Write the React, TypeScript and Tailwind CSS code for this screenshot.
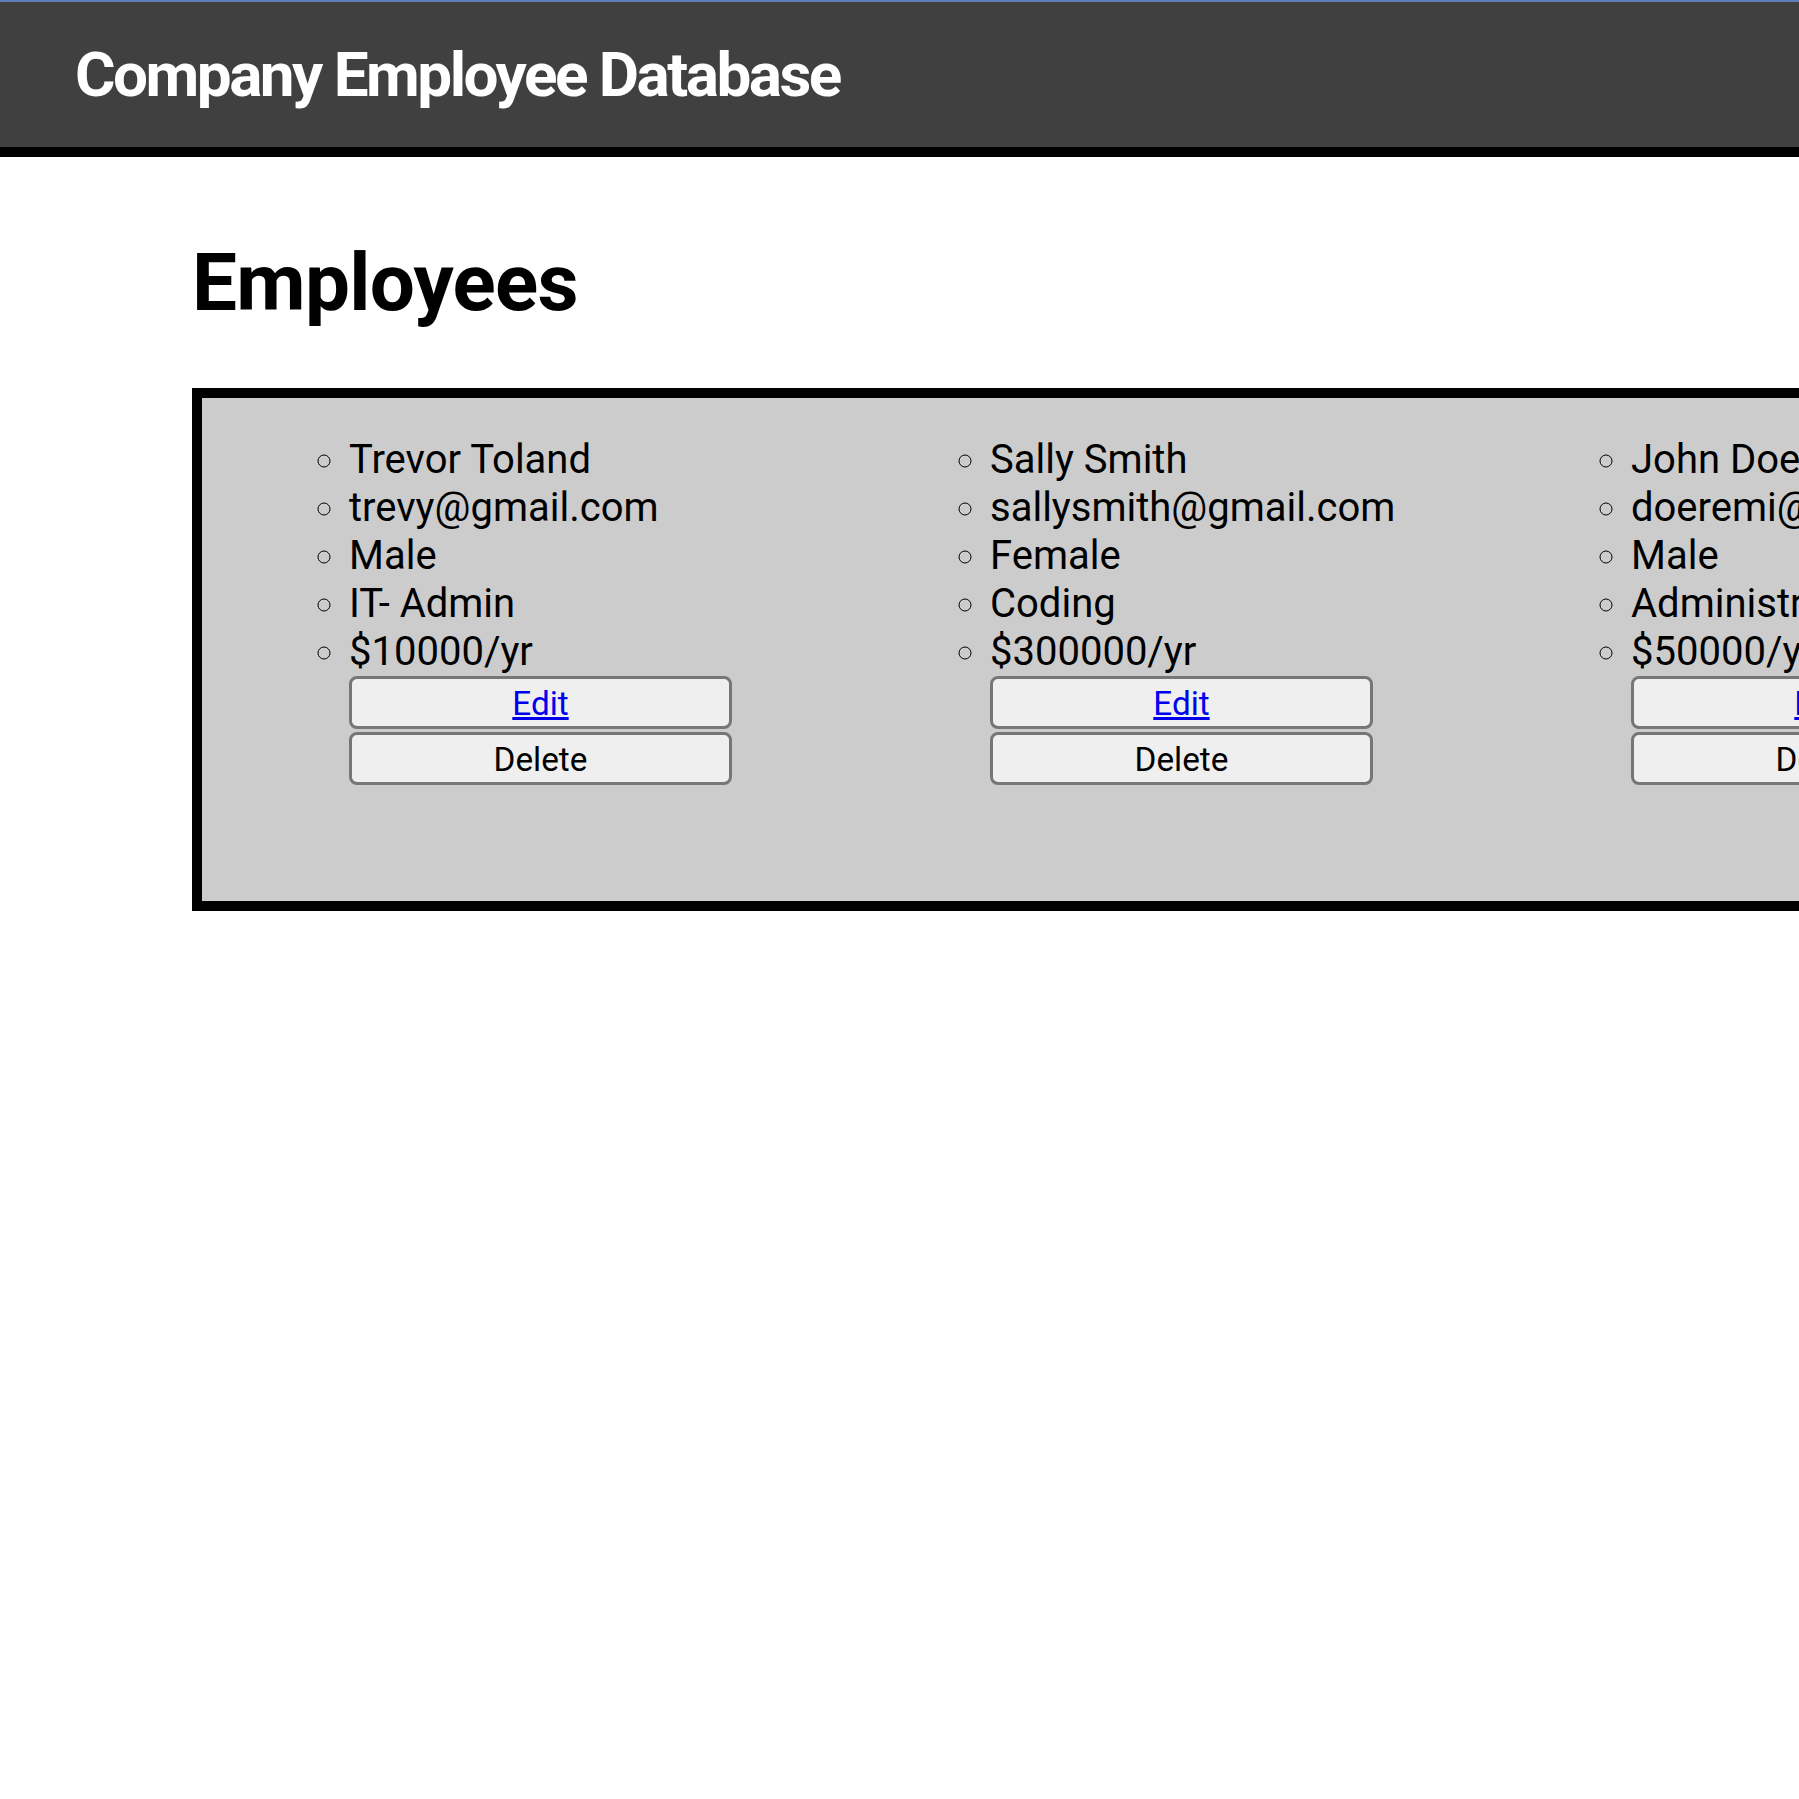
import React from "react";

type Employee = {
  name: string;
  email: string;
  gender: string;
  department: string;
  salary: string;
};

const employees: Employee[] = [
  { name: "Trevor Toland", email: "trevy@gmail.com", gender: "Male", department: "IT- Admin", salary: "$10000/yr" },
  { name: "Sally Smith", email: "sallysmith@gmail.com", gender: "Female", department: "Coding", salary: "$300000/yr" },
  { name: "John Doe", email: "doeremi@gmail.com", gender: "Male", department: "Administration", salary: "$50000/yr" },
];

function EmployeeCard({ employee }: { employee: Employee }) {
  return (
    <div className="w-[641px] shrink-0 pl-[147px]">
      <ul className="list-[circle] text-[40px] leading-[48px] text-black">
        <li>{employee.name}</li>
        <li>{employee.email}</li>
        <li>{employee.gender}</li>
        <li>{employee.department}</li>
        <li>{employee.salary}</li>
      </ul>
      <div className="flex flex-col gap-[3px] w-[383px]">
        <button className="h-[53px] rounded-[8px] border-[3px] border-[#767676] bg-[#efefef] text-[33.3px]">
          <a href="#" className="text-[#0000ee] underline">
            Edit
          </a>
        </button>
        <button className="h-[53px] rounded-[8px] border-[3px] border-[#767676] bg-[#efefef] text-[33.3px] text-black">
          Delete
        </button>
      </div>
    </div>
  );
}

export default function App() {
  return (
    <div className="w-[1799px] h-[1799px] overflow-hidden bg-white font-['Roboto',sans-serif]">
      <div className="h-[2px] bg-[#5b7db8]"></div>
      <header className="flex items-center h-[155px] pl-[75px] bg-[#404040] border-b-[10px] border-black">
        <h1 className="text-[62px] font-bold tracking-[-2.5px] text-white">Company Employee Database</h1>
      </header>

      <main className="pl-[192px] pt-[66px]">
        <h1 className="text-[80px] font-bold leading-normal tracking-[-0.7px] text-black mb-[45px]">Employees</h1>
        <div className="flex w-[2400px] h-[523px] pt-[38px] border-[10px] border-black bg-[#cccccc]">
          {employees.map((e) => (
            <EmployeeCard key={e.name} employee={e} />
          ))}
        </div>
      </main>
    </div>
  );
}
